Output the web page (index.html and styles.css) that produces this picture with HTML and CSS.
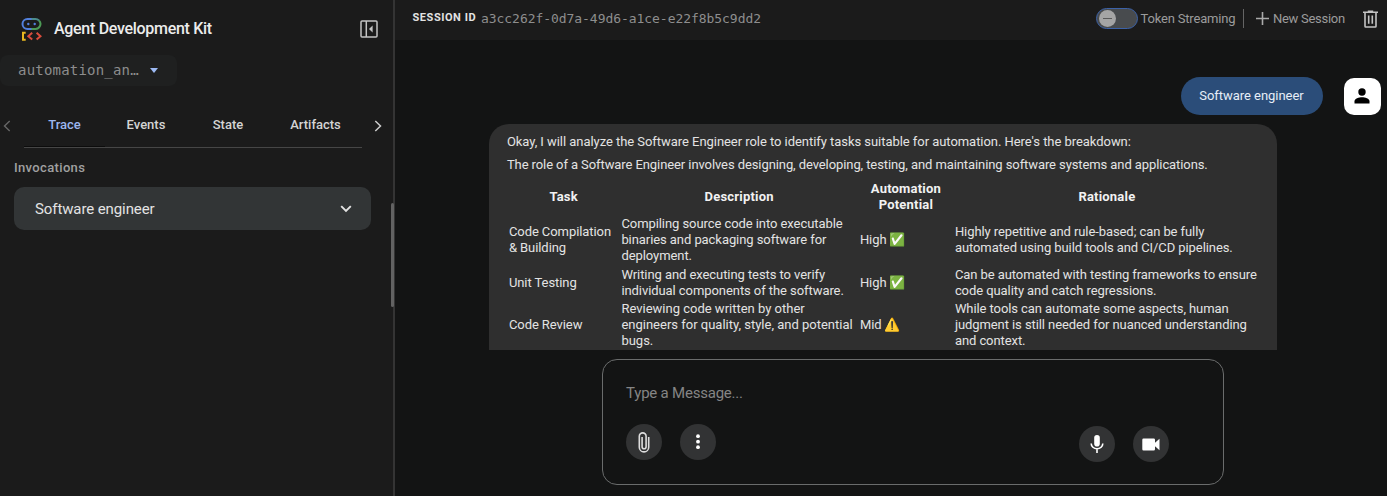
FILE: index.html
```html
<!DOCTYPE html>
<html lang="en">
<head>
<meta charset="utf-8">
<title>Agent Development Kit</title>
<link rel="stylesheet" href="styles.css">
</head>
<body>
<div class="app">
  <aside class="sidebar">
    <div class="brand">
      <svg class="logo" width="22" height="24" viewBox="0 0 22 24" fill="none" stroke-width="2">
        <path d="M12 2H7.500a5 5 0 0 0 0 10H12" stroke="#5280dc"/>
        <path d="M11.500 2h4a5 5 0 0 1 3.500 1.500" stroke="#4c8c8c"/>
        <path d="M19 3.500A5 5 0 0 1 15.500 12h-4" stroke="#4c9a55"/>
        <circle cx="8.300" cy="7" r="1.200" fill="#5280dc"/><circle cx="14.700" cy="7" r="1.200" fill="#5280dc"/>
        <path d="M5.700 15.800H3v7h2.700" stroke="#e8b820"/>
        <path d="M12.200 15.800L8.300 19.200l3.900 3.400M16.600 15.800l3.900 3.400-3.900 3.400" stroke="#d94c3c"/>
      </svg>
      <h1 class="brand-name">Agent Development Kit</h1>
      <svg class="collapse" width="18" height="18" viewBox="0 0 18 18" fill="none" stroke="#c4c4c4" stroke-width="1.5">
        <rect x="1" y="1" width="16" height="16" rx="1"/><path d="M6.3 1v16"/><path d="M12.6 5.5v7L9 9z" fill="#c4c4c4" stroke="none"/>
      </svg>
    </div>
    <div class="app-select"><span class="app-name">automation_an…</span><i class="caret"></i></div>
    <nav class="tabs">
      <svg class="arrow" width="8" height="12" viewBox="0 0 8 12" fill="none" stroke="#666" stroke-width="1.4"><path d="M6.7 1L1.5 6l5.2 5"/></svg>
      <div class="tab-list">
        <span class="tab active">Trace</span><span class="tab">Events</span><span class="tab">State</span><span class="tab">Artifacts</span>
      </div>
      <svg class="arrow" width="8" height="12" viewBox="0 0 8 12" fill="none" stroke="#ccc" stroke-width="1.5"><path d="M1.3 1l5.2 5-5.2 5"/></svg>
    </nav>
    <h2 class="section">Invocations</h2>
    <div class="invocation">
      <span class="invocation-name">Software engineer</span>
      <svg width="12" height="8" viewBox="0 0 12 8" fill="none" stroke="#e3e3e3" stroke-width="1.9"><path d="M1.2 1.2L6 6l4.800-4.800"/></svg>
    </div>
    <div class="resize-handle"></div>
  </aside>
  <main class="main">
    <header class="toolbar">
      <span class="session-label">SESSION ID</span>
      <span class="session-id">a3cc262f-0d7a-49d6-a1ce-e22f8b5c9dd2</span>
      <div class="actions">
        <span class="toggle"><span class="knob"></span></span>
        <span class="token-text">Token Streaming</span>
        <span class="divider"></span>
        <svg class="plus" width="13" height="13" viewBox="0 0 13 13" stroke="#aaa" stroke-width="1.6"><path d="M6.500 0v13M0 6.500h13"/></svg>
        <span class="new-text">New Session</span>
        <svg class="trash" width="15" height="18" viewBox="0 0 15 18" fill="none" stroke="#c4c4c4" stroke-width="1.6"><path d="M0 2.300h15M4.800 1.300h5.400M2 2.500v13.700q0 .8.800.8h9.400q.8 0 .8-.8V2.500M5.700 5.500v8.300M9.300 5.500v8.300"/></svg>
      </div>
    </header>
    <section class="chat">
      <div class="user-row">
        <div class="user-bubble">Software engineer</div>
        <div class="avatar"><svg width="16" height="16" viewBox="0 0 16 16"><circle cx="8" cy="4" r="3.700"/><path d="M.5 15.500v-2.300C.5 10.500 5 9.200 8 9.200s7.500 1.300 7.500 4v2.300z"/></svg></div>
      </div>
      <div class="answer">
        <p class="line intro">Okay, I will analyze the Software Engineer role to identify tasks suitable for automation. Here's the breakdown:</p>
        <p class="line role">The role of a Software Engineer involves designing, developing, testing, and maintaining software systems and applications.</p>
        <table class="tasks">
          <colgroup><col class="c-task"><col class="c-desc"><col class="c-auto"><col class="c-why"></colgroup>
          <tr class="r-head"><th>Task</th><th>Description</th><th>Automation<br>Potential</th><th>Rationale</th></tr>
          <tr class="r-three"><td>Code Compilation<br>&amp; Building</td><td>Compiling source code into executable<br>binaries and packaging software for<br>deployment.</td><td>High <span class="emoji">✅</span></td><td>Highly repetitive and rule-based; can be fully<br>automated using build tools and CI/CD pipelines.</td></tr>
          <tr class="r-two"><td>Unit Testing</td><td>Writing and executing tests to verify<br>individual components of the software.</td><td>High <span class="emoji">✅</span></td><td>Can be automated with testing frameworks to ensure<br>code quality and catch regressions.</td></tr>
          <tr class="r-last"><td>Code Review</td><td>Reviewing code written by other<br>engineers for quality, style, and potential<br>bugs.</td><td>Mid <span class="emoji">⚠️</span></td><td>While tools can automate some aspects, human<br>judgment is still needed for nuanced understanding<br>and context.</td></tr>
        </table>
      </div>
    </section>
    <div class="composer">
      <div class="placeholder">Type a Message...</div>
      <div class="composer-actions">
        <span class="round"><svg width="12" height="21" viewBox="0 0 12 21" fill="none" stroke="#ddd" stroke-width="1.600"><path d="M10.700 5v10.200a4.700 4.700 0 0 1-9.400 0V4.300a3.300 3.300 0 0 1 6.800 0v10.400a2 2 0 0 1-4 0V5"/></svg></span>
        <span class="round"><svg width="4" height="16" viewBox="0 0 4 16" fill="#fff"><circle cx="2" cy="2.200" r="1.900"/><circle cx="2" cy="7.700" r="1.900"/><circle cx="2" cy="13.200" r="1.900"/></svg></span>
        <span class="round mic"><svg width="14" height="18" viewBox="0 0 14 18"><rect x="4.200" y="0" width="5.600" height="11.500" rx="2.800" fill="#fff"/><path d="M1.200 8.500a5.800 5.300 0 0 0 11.600 0M7 14v4" fill="none" stroke="#fff" stroke-width="1.600"/></svg></span>
        <span class="round cam"><svg width="18" height="13" viewBox="0 0 18 13" fill="#fff"><path d="M1.500.5h10.200q1.300 0 1.300 1.300v3l4.500-4v11.400l-4.500-4v3q0 1.300-1.300 1.300H1.500Q.3 12.500.3 11.200V1.800Q.3.5 1.500.5z"/></svg></span>
      </div>
    </div>
  </main>
</div>
</body>
</html>
```
FILE: styles.css
```css
* { box-sizing: border-box; }
body { margin: 0; background: #131414; color: #e3e3e3; font-family: Roboto, "Open Sans", sans-serif; }
h1, h2, p { margin: 0; font-weight: 500; }
svg { display: block; flex: none; }
.app { display: flex; width: 1387px; height: 496px; overflow: hidden; }

.sidebar { position: relative; width: 395px; flex: none; background: #1b1b1b; border-right: 2px solid #343434; }
.brand { display: flex; align-items: center; height: 55px; padding: 3px 15px 0 20px; }
.brand-name { flex: 1; margin-left: 12px; font-size: 16px; line-height: 20px; color: #ececec; letter-spacing: -.3px; }
.app-select { display: flex; align-items: center; width: 177px; height: 31px; padding: 0 0 1px 18px; border-radius: 8px; background: #1f2020; }
.app-name { width: 122px; font: 14px/20px "DejaVu Sans Mono", monospace; letter-spacing: .2px; color: #8d8d8d; white-space: nowrap; }
.caret { margin-left: 9.500px; border: 4.500px solid transparent; border-top: 5px solid #9dbaf3; border-bottom: 0; }
.tabs { display: flex; align-items: center; height: 48px; margin-top: 14px; padding: 0 11px 0 3px; }
.arrow { margin-top: 4px; }
.tab-list { display: grid; grid-template-columns: 81px 82px 82px 93px; width: 338px; height: 48px; margin: 0 12px 0 13px; border-bottom: 1px solid #464646; }
.tab { padding-top: 15px; font-size: 13px; line-height: 20px; font-weight: 500; text-align: center; color: #d4d4d4; }
.tab.active { color: #9cb6ee; border-bottom: 1px solid #0c0c0c; }
.section { margin: 10px 0 0 14px; font-size: 13px; line-height: 20px; color: #a0a0a0; letter-spacing: .35px; }
.invocation { display: flex; align-items: center; justify-content: space-between; width: 357px; height: 43px; margin: 9px 0 0 14px; padding: 0 19px 0 21px; border-radius: 10px; background: #323536; }
.invocation-name { font-size: 15px; letter-spacing: -.1px; }
.resize-handle { position: absolute; right: -1px; top: 203px; width: 3px; height: 104px; border-radius: 2px; background: #626262; }

.main { flex: 1; min-width: 0; display: flex; flex-direction: column; }
.toolbar { display: flex; flex: none; height: 40px; padding: 8px 9.500px 0 17.500px; background: #1b1b1b; white-space: nowrap; }
.session-label { width: 68.500px; font-size: 11px; line-height: 19px; font-weight: 700; letter-spacing: .55px; }
.session-id { font: 13px/21px "DejaVu Sans Mono", monospace; letter-spacing: -.05px; color: #8e8e8e; }
.actions { display: flex; margin-left: auto; height: 21px; align-items: center; font-size: 13px; color: #9b9b9b; }
.toggle { width: 42px; height: 21px; padding: 1px 2px; border: 1.5px solid #3c62a8; border-radius: 11px; background: #484b4e; }
.knob { display: flex; align-items: center; justify-content: center; width: 17px; height: 17px; border-radius: 50%; background: #a5a5a5; }
.knob::before { content: ""; width: 9px; height: 1.5px; background: #5a5a5a; }
.token-text { width: 95px; margin-left: 3px; letter-spacing: -.18px; }
.divider { width: 1px; height: 19px; margin: 0 12px 0 7px; background: #656565; }
.new-text { width: 73px; margin-left: 4.500px; letter-spacing: -.28px; }
.trash { margin-left: 16.500px; }

.chat { height: 310px; flex: none; overflow: hidden; padding-top: 37px; }
.user-row { display: flex; justify-content: flex-end; padding-right: 6.500px; height: 47px; }
.user-bubble { width: 142px; height: 38px; border-radius: 19px; background: #2b4d79; font-size: 13px; line-height: 38px; letter-spacing: -.04px; text-align: center; color: #e6edf7; }
.avatar { display: flex; align-items: center; justify-content: center; width: 37px; height: 37px; margin: .5px 0 0 21px; border-radius: 10px; background: #fff; }
.answer { width: 788px; height: 240px; margin-left: 94.400px; padding: 6px 17.500px 0; border-radius: 20px 20px 0 0; background: #2f2f2f; font-size: 13px; }
.line { font-weight: 400; line-height: 23px; white-space: nowrap; }
.intro { letter-spacing: -.048px; }
.role { letter-spacing: -.088px; }
.tasks { width: 753px; margin-top: 4px; table-layout: fixed; border-collapse: collapse; line-height: 16px; white-space: nowrap; }
.tasks td, .tasks th { padding: 0 0 0 2px; vertical-align: middle; }
.tasks td { letter-spacing: -.07px; }
.tasks td:nth-child(4) { letter-spacing: -.08px; }
.tasks tr:last-child td:nth-child(2) { letter-spacing: 0; }
.tasks th { padding: 0 0 0 1px; font-weight: 700; color: #f2f2f2; letter-spacing: .2px; }
.c-task { width: 112.500px; } .c-desc { width: 238.500px; } .c-auto { width: 95px; }
.r-head { height: 34px; } .r-three { height: 52px; } .r-two { height: 34px; } .r-last { height: 50px; }
.emoji { font-family: "Noto Color Emoji", sans-serif; font-size: 13px; line-height: 1; margin-left: -.500px; }

.composer { width: 622px; height: 126px; margin: 9.400px 0 0 207.400px; padding: 22.500px 54px 0 22.700px; border: 1px solid #6a6c6c; border-radius: 15px; }
.placeholder { font-size: 15px; line-height: 20px; letter-spacing: -.22px; color: #858585; }
.composer-actions { display: flex; gap: 18px; margin-top: 21.500px; }
.round { display: flex; align-items: center; justify-content: center; width: 36px; height: 36px; border-radius: 50%; background: #323334; }
.mic { margin: 2px 0 0 auto; }
.cam { margin-top: 2px; }
```
